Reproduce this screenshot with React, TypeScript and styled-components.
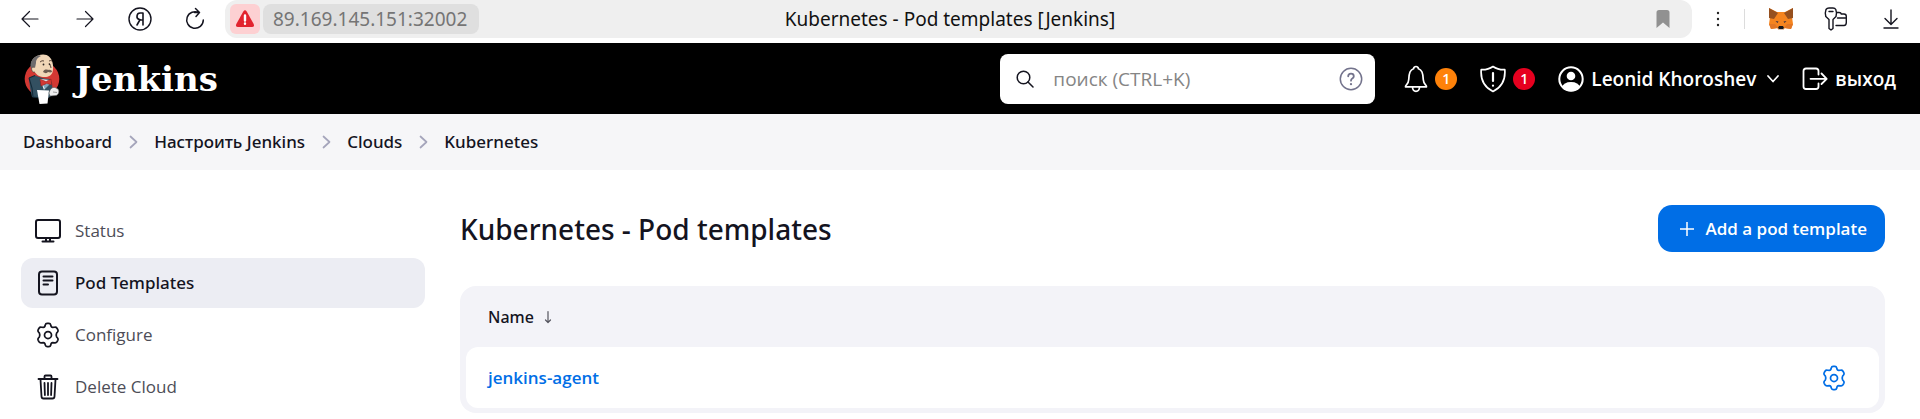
import React from 'react';
import styled, { createGlobalStyle } from 'styled-components';

const ui = `"Open Sans", "Noto Sans", "Liberation Sans", sans-serif`;
const medium = `"Noto Sans", "Open Sans", sans-serif`;
const chrome = `"Noto Sans", "Open Sans", sans-serif`;
const ink = '#14141f';
const blue = '#006ee6';

const GlobalStyle = createGlobalStyle`
  *, *::before, *::after { box-sizing: border-box; }
  body { margin: 0; background: #fff; color: ${ink}; font-family: ${ui}; font-size: 17px; line-height: 24px; }
  a { color: inherit; text-decoration: none; }
  button { font: inherit; color: inherit; border: 0; padding: 0; background: none; cursor: pointer; }
  svg { display: block; flex: none; }
`;

/* Browser toolbar */
const BrowserBar = styled.div`
  display: flex;
  height: 43px;
  padding: 0 2px;
  background: #fff;
`;
const BarGroup = styled.div`
  display: flex;
  height: 38px;
`;
const BarButton = styled.button<{ $width?: number }>`
  display: flex;
  align-items: center;
  justify-content: center;
  width: ${({ $width = 55 }) => $width}px;
`;
const BarDivider = styled.span`
  width: 1px;
  height: 20px;
  margin: 9px 8px 0 0;
  background: #dcdcdc;
`;
const AddressBar = styled.div`
  flex: 1;
  display: grid;
  grid-template-columns: 1fr auto 1fr;
  align-items: center;
  height: 38px;
  margin-left: 3px;
  padding: 0 22px 0 5px;
  border-radius: 12px;
  background: #efefef;
  font-family: ${chrome};
  font-size: 19px;
`;
const Address = styled.div`
  display: flex;
  gap: 3px;
`;
const Warning = styled.button`
  display: flex;
  align-items: center;
  justify-content: center;
  width: 30px;
  height: 30px;
  border-radius: 6px;
  background: #fdd0d2;
`;
const UrlInput = styled.input`
  width: 216px;
  height: 30px;
  padding: 0 10px;
  border: 0;
  border-radius: 8px;
  background: #dfdfdf;
  color: #757575;
  font: inherit;
`;
const PageTitle = styled.span`
  color: #111;
`;
const Bookmark = styled.button`
  justify-self: end;
`;

/* Jenkins header */
const Header = styled.header`
  display: flex;
  align-items: center;
  gap: 29px;
  height: 71px;
  padding: 0 24px;
  background: #000;
  color: #fff;
`;
const Brand = styled.a`
  display: flex;
  align-items: center;
  gap: 15px;
  margin-right: auto;
  font: bold 34px/44px "DejaVu Serif", "Liberation Serif", serif;
`;
const Search = styled.label`
  display: flex;
  align-items: center;
  width: 375px;
  height: 50px;
  padding: 0 12px 0 16px;
  border-radius: 8px;
  background: #fff;
  color: ${ink};
`;
const SearchInput = styled.input`
  flex: 1;
  min-width: 0;
  padding: 0 0 0 19px;
  border: 0;
  outline: 0;
  background: none;
  font: 400 19px/26px ${ui};
  &::placeholder { color: #858585; opacity: 1; }
`;
const Actions = styled.nav`
  display: flex;
  align-items: center;
  gap: 23px;
  font-size: 19px;
  font-weight: 600;
`;
const Action = styled.a`
  display: flex;
  align-items: center;
  gap: 7px;
`;
const Badge = styled.span<{ $color: string }>`
  width: 22px;
  height: 22px;
  border-radius: 50%;
  background: ${({ $color }) => $color};
  font-size: 14px;
  line-height: 22px;
  text-align: center;
`;
const MenuButton = styled.button`
  display: flex;
  padding-left: 4px;
`;

/* Breadcrumbs */
const Breadcrumbs = styled.ol`
  display: flex;
  align-items: center;
  height: 56px;
  margin: 0;
  padding: 0 23px;
  background: #f6f6f8;
  list-style: none;
  font-family: ${medium};
  font-weight: 500;
`;
const Crumb = styled.li`
  display: flex;
  align-items: center;
  gap: 17px;
  & + & { margin-left: 16px; }
`;

/* Page body */
const Body = styled.div`
  display: flex;
  gap: 35px;
  padding: 35px 35px 6px 21px;
`;
const SideNav = styled.nav`
  display: flex;
  flex-direction: column;
  flex: none;
  gap: 2px;
  width: 404px;
  padding-top: 1px;
`;
const SideLink = styled.a<{ $active?: boolean }>`
  display: flex;
  align-items: center;
  gap: 13px;
  height: 50px;
  padding: 0 13px;
  border-radius: 12px;
  background: ${({ $active }) => ($active ? '#ecedf3' : 'transparent')};
  color: ${({ $active }) => ($active ? ink : '#4d4d57')};
  font-family: ${({ $active }) => ($active ? medium : ui)};
  font-weight: ${({ $active }) => ($active ? 500 : 400)};
  svg { color: ${ink}; }
`;
const Main = styled.main`
  flex: 1;
  min-width: 0;
`;
const TitleRow = styled.div`
  display: flex;
  align-items: center;
  justify-content: space-between;
  height: 47px;
  margin-bottom: 34px;
`;
const Title = styled.h1`
  margin: 0;
  font-family: ${medium};
  font-size: 28px;
  line-height: 40px;
  font-weight: 500;
`;
const PrimaryLink = styled.a`
  display: flex;
  align-items: center;
  gap: 12px;
  height: 47px;
  padding: 0 18px 0 22px;
  border-radius: 14px;
  background: ${blue};
  color: #fff;
  font-weight: 600;
`;
const TableCard = styled.div`
  padding: 0 6px 5px;
  border-radius: 16px;
  background: #f3f3f8;
`;
const Table = styled.table`
  width: 100%;
  border-collapse: separate;
  border-spacing: 0;
`;
const HeadCell = styled.th`
  height: 61px;
  padding: 0 22px;
  text-align: left;
  font-family: ${medium};
  font-size: 16px;
  font-weight: 500;
`;
const SortLink = styled.a`
  display: flex;
  align-items: center;
  gap: 10px;
`;
const Cell = styled.td`
  height: 61px;
  padding: 0 22px;
  background: #fff;
  color: ${blue};
  font-weight: 600;
  &:first-child { border-radius: 12px 0 0 12px; }
  &:last-child { width: 90px; padding: 0 31px; border-radius: 0 12px 12px 0; }
`;

type IconProps = { size?: number; width?: number; height?: number; box?: string; stroke?: number; children: React.ReactNode };
const Icon = ({ size = 24, width = size, height = size, box, stroke = 2, children }: IconProps) => (
  <svg width={width} height={height} viewBox={box ?? `0 0 ${width} ${height}`} fill="none" stroke="currentColor"
    strokeWidth={stroke} strokeLinecap="round" strokeLinejoin="round" aria-hidden="true">{children}</svg>
);

const Gear = () => (
  <Icon size={28} box="0 0 24 24" stroke={1.5}>
    <path d="M9.7 3.3q.3-1.200 1.500-1.200h1.600q1.200 0 1.500 1.200l.3 1.100q.3.900 1.300 1l1.900-.1q1.200-.2 1.900.9l.7 1.200q.6 1.100-.2 2l-.8.9q-.8 1.700 0 3.400l.8.9q.8.9.2 2l-.7 1.200q-.7 1.100-1.900.9l-1.900-.1q-1 .1-1.300 1l-.3 1.100q-.3 1.200-1.500 1.200h-1.600q-1.200 0-1.500-1.200l-.3-1.100q-.3-.9-1.300-1l-1.900.1q-1.200.2-1.900-.9l-.7-1.200q-.6-1.100.2-2l.8-.9q.8-1.700 0-3.400l-.8-.9q-.8-.9-.2-2l.7-1.200q.7-1.100 1.900-.9l1.900.1q1-.1 1.300-1z" />
    <circle cx="12" cy="12" r="3" />
  </Icon>
);

const Butler = () => (
  <svg width="36" height="50" viewBox="0 0 36 50" aria-hidden="true">
    <ellipse cx="18" cy="25" rx="17.3" ry="17" fill="#d33833" />
    <path d="M5 24l6-2.5 9 3 6 .5 2 4 1 12-5 3-16-1-2-9z" fill="#335061" />
    <path d="M5 24l3 10 1 9 8 1M5 24l6-2.5" fill="none" stroke="#142a38" strokeWidth="1.1" />
    <path d="M16 25l4 11 6-10z" fill="#eef2f5" />
    <path d="M18 29l3 6 5-5z" fill="#81a8bd" />
    <path d="M9 18C5 12 7 4 14 1.500c8-3 13 1 14.500 7 .8 3 .8 6 .2 9-1 4-4 5.500-8 5.500-5 0-8-2-10-5z" fill="#f0d6b7" />
    <path d="M9 18C4 12 7 3 15 1.200L17 2c-4 2-5 4-5 7l-1 5-2-1c-2 1-1 4 1 5z" fill="#6d6b6d" />
    <path d="M10 13.500c-2-1-3 1-2 3 .5 1.500 2 2 3 1.500" fill="#f0d6b7" stroke="#49372e" strokeWidth=".7" />
    <path d="M16 8q2-2 4-1M25 7q2-1 3 0M25 9q2 3 2 5" fill="none" stroke="#49372e" strokeWidth=".9" />
    <circle cx="19.500" cy="10.500" r=".9" fill="#2d2522" /><circle cx="25.500" cy="10.500" r=".8" fill="#2d2522" />
    <path d="M19 18c1-3 4-2.500 5-2 2-.5 4 0 4 2-2 1-3 0-4 0-1 1.500-3 1.500-5 0z" fill="#6e5c50" />
    <path d="M16 25l6 2.500 5-2.500 .8 6-5-1.500-5.800 2.500z" fill="#d33833" stroke="#8b1a1a" strokeWidth=".5" />
    <path d="M13 36l12 .5-1.500 13-8 .5z" fill="#fff" />
    <path d="M25 39c1-4 3-6 6-5.500l3 1.500c2 3 0 6-2 6.500l-6 .5z" fill="#eee" stroke="#555" strokeWidth=".5" />
    <path d="M29 38l4 .5" stroke="#888" strokeWidth=".8" />
  </svg>
);

const Fox = () => (
  <svg width="26" height="24" viewBox="0 0 26 24" aria-hidden="true">
    <path d="M1 1l8 4h8l8-4-1 9 1 7-2 5-6-1-2 2h-4l-2-2-6 1-2-5 1-7z" fill="#f5841f" />
    <path d="M1 1l9 5-4 6-5-1zM25 1l-9 5 4 6 5-1z" fill="#96501f" />
    <path d="M1 17h6l3 4-7 1zM25 17h-6l-3 4 7 1z" fill="#e27625" />
    <path d="M10 21l1 2h4l1-2-2 0z" fill="#d7c1b3" />
    <path d="M11 19h4l1 2-1 1h-4l-1-1z" fill="#16161a" />
    <path d="M7.500 14l3 .5-1 1.500zM18.500 14l-3 .5 1 1.500z" fill="#3a3040" />
  </svg>
);

const crumbs = ['Dashboard', 'Настроить Jenkins', 'Clouds', 'Kubernetes'];

const sideItems = [
  { label: 'Status', icon: <Icon size={28}><rect x="2" y="3" width="24" height="18" rx="2" /><path d="M8.500 24.500h11M12 21.500v2.500M16 21.500v2.500" /></Icon> },
  { label: 'Pod Templates', active: true, icon: <Icon size={28}><rect x="5" y="2.500" width="18" height="23" rx="3" /><path d="M9.500 7.500h9M9.500 11.500h9M9.500 15.500h4.500" /></Icon> },
  { label: 'Configure', icon: <Gear /> },
  { label: 'Delete Cloud', icon: <Icon size={28}><path d="M4.500 6h19M6.500 6.500l1 17q.1 2 2 2h9q1.900 0 2-2l1-17M10.500 5.500v-2q0-1 1-1h5q1 0 1 1v2M10.500 10l.4 12M14 10v12M17.500 10l-.4 12" strokeWidth="1.800" /></Icon> },
];

export default function App() {
  return (
    <>
      <GlobalStyle />
      <BrowserBar>
        <BarGroup>
          <BarButton aria-label="Back"><Icon width={18} height={18} stroke={1.2}><path d="M17 9H1M8.500 1.500L1 9l7.500 7.500" /></Icon></BarButton>
          <BarButton aria-label="Forward"><Icon width={18} height={18} stroke={1.2}><path d="M1 9h16M9.500 1.500L17 9l-7.500 7.500" /></Icon></BarButton>
          <BarButton aria-label="Yandex">
            <Icon size={24} stroke={1.4}><circle cx="12" cy="12" r="11" /><path d="M15 18V6h-2.500a3.300 3.300 0 0 0-1 6.500L13 13h2M11.800 13L9 18" strokeWidth="1.600" /></Icon>
          </BarButton>
          <BarButton aria-label="Reload"><Icon width={20} height={24} stroke={1.5}><path d="M18.300 13A8.300 8.300 0 1 1 14 5.700M9.500 5.500h5M10.500 1.500l4 4-3.500 4" /></Icon></BarButton>
        </BarGroup>
        <AddressBar>
          <Address>
            <Warning aria-label="Connection is not secure">
              <svg width="20" height="18" viewBox="0 0 20 18" aria-hidden="true">
                <path d="M8.300 1.500q1.700-2.500 3.400 0l7 12.500q1 3-1.700 3H3q-2.700 0-1.700-3z" fill="#e2242f" />
                <path d="M10 5.500v5M10 13.500v.2" stroke="#fff" strokeWidth="2.400" strokeLinecap="round" />
              </svg>
            </Warning>
            <UrlInput aria-label="Address" defaultValue="89.169.145.151:32002" />
          </Address>
          <PageTitle>Kubernetes - Pod templates [Jenkins]</PageTitle>
          <Bookmark aria-label="Bookmark">
            <svg width="14" height="18" viewBox="0 0 14 18" aria-hidden="true"><path d="M3 0h8q2.500 0 2.500 2.500V18L7 12.500.5 18V2.500Q.5 0 3 0z" fill="#919191" /></svg>
          </Bookmark>
        </AddressBar>
        <BarGroup>
          <BarButton $width={52} aria-label="Page menu">
            <svg width="4" height="16" viewBox="0 0 4 16" fill="#222" aria-hidden="true"><circle cx="2" cy="2" r="1.200" /><circle cx="2" cy="8" r="1.200" /><circle cx="2" cy="14" r="1.200" /></svg>
          </BarButton>
          <BarDivider />
          <BarButton aria-label="MetaMask"><Fox /></BarButton>
          <BarButton aria-label="Passwords">
            <Icon width={24} height={24} stroke={1.400}>
              <path d="M5 12.500L1.800 9.500q-1-4 .2-7Q3 1 5 1h4q2 0 2.800 1.500 1.200 3 .2 7L9 12.500v9L7 23l-2-1.500zM5 4.500h4" />
              <path d="M13 5.500h2q2 0 2.300 1.500h2.700q2.300 0 2.300 2.500v6q0 3-2.300 3H12M13.500 11H22" />
            </Icon>
          </BarButton>
          <BarButton aria-label="Downloads"><Icon width={16} height={20} stroke={1.400}><path d="M8 1v14M2 9.500l6 6 6-6M1 19h14" /></Icon></BarButton>
        </BarGroup>
      </BrowserBar>

      <Header>
        <Brand href="#"><Butler />Jenkins</Brand>
        <Search>
          <Icon size={18} stroke={1.500}><circle cx="7.500" cy="7.500" r="6.300" /><path d="M12 12l5 5" /></Icon>
          <SearchInput type="search" aria-label="поиск" placeholder="поиск (CTRL+K)" />
          <Icon size={24} stroke={1.500}>
            <g stroke="#73738c"><circle cx="12" cy="12" r="10.700" /><path d="M9.200 9.300q0-2.600 2.800-2.600t2.800 2.500q0 1.400-1.500 2.300-1.300.8-1.300 2.200" strokeWidth="1.800" /><path d="M12 17v.2" strokeWidth="2.200" /></g>
          </Icon>
        </Search>
        <Actions>
          <Action href="#" aria-label="Notifications">
            <Icon width={24} height={28} stroke={1.700}>
              <path d="M1.500 21.800q0-.8 1-2 2-2 2.200-5 .2-5.300 1.300-7.800Q7.200 4.500 9.500 3.700 10 1.500 12 1.500t2.500 2.200q2.300.8 3.500 3.300 1.100 2.500 1.300 7.800.2 3 2.200 5 1 1.200 1 2zM8.500 22.300q.2 4 3.500 4t3.500-4" />
            </Icon>
            <Badge $color="#fe820a">1</Badge>
          </Action>
          <Action href="#" aria-label="Security warnings">
            <Icon width={26} height={28} stroke={1.700}>
              <path d="M13 1.500Q8 5 1.200 4.700 0 20 13 26.500 26 20 24.800 4.700 18 5 13 1.500z" /><path d="M13 8v8M13 20.500v.2" strokeWidth="2.200" />
            </Icon>
            <Badge $color="#e6001f">1</Badge>
          </Action>
          <Action as="div">
            <Action href="#">
              <Icon size={26} stroke={2}>
                <circle cx="13" cy="13" r="11.700" /><g fill="currentColor" stroke="none"><circle cx="13" cy="10" r="4.300" /><path d="M4 21.500q1.500-5.500 9-5.500t9 5.500q-3.500 3.800-9 3.800t-9-3.800z" /></g>
              </Icon>
              Leonid Khoroshev
            </Action>
            <MenuButton aria-label="User menu"><Icon width={12} height={8} stroke={1.700}><path d="M1 1l5 5.500L11 1" /></Icon></MenuButton>
          </Action>
          <Action href="#">
            <Icon width={26} height={24} stroke={1.800}><path d="M16.500 7.500V4q0-2.500-2.500-2.500H4Q1.500 1.500 1.500 4v15.500Q1.500 22 4 22h10q2.500 0 2.500-2.500V16.500M8.500 11.800H24.500M19.500 6.500l5.200 5.300-5.200 5.200" /></Icon>
            выход
          </Action>
        </Actions>
      </Header>

      <nav aria-label="Breadcrumbs">
        <Breadcrumbs>
          {crumbs.map((name, i) => (
            <Crumb key={name}>
              <a href="#">{name}</a>
              {i < crumbs.length - 1 && <Icon width={9} height={14} stroke={1.700}><path d="M1.500 1.500L7.500 7l-6 5.500" stroke="#a5a5bb" /></Icon>}
            </Crumb>
          ))}
        </Breadcrumbs>
      </nav>

      <Body>
        <SideNav aria-label="Cloud">
          {sideItems.map(({ label, icon, active }) => (
            <SideLink key={label} href="#" $active={active} aria-current={active ? 'page' : undefined}>{icon}{label}</SideLink>
          ))}
        </SideNav>
        <Main>
          <TitleRow>
            <Title>Kubernetes - Pod templates</Title>
            <PrimaryLink href="#"><Icon size={14} stroke={1.500}><path d="M7 0v14M0 7h14" /></Icon>Add a pod template</PrimaryLink>
          </TitleRow>
          <TableCard>
            <Table>
              <thead>
                <tr>
                  <HeadCell scope="col">
                    <SortLink href="#">Name<Icon width={8} height={14} stroke={1.200}><path d="M4 1.500v11M1.500 10L4 12.500 6.500 10" stroke="#55555f" /></Icon></SortLink>
                  </HeadCell>
                  <HeadCell as="td" />
                </tr>
              </thead>
              <tbody>
                <tr>
                  <Cell><a href="#">jenkins-agent</a></Cell>
                  <Cell><a href="#" aria-label="Configure jenkins-agent"><Gear /></a></Cell>
                </tr>
              </tbody>
            </Table>
          </TableCard>
        </Main>
      </Body>
    </>
  );
}
